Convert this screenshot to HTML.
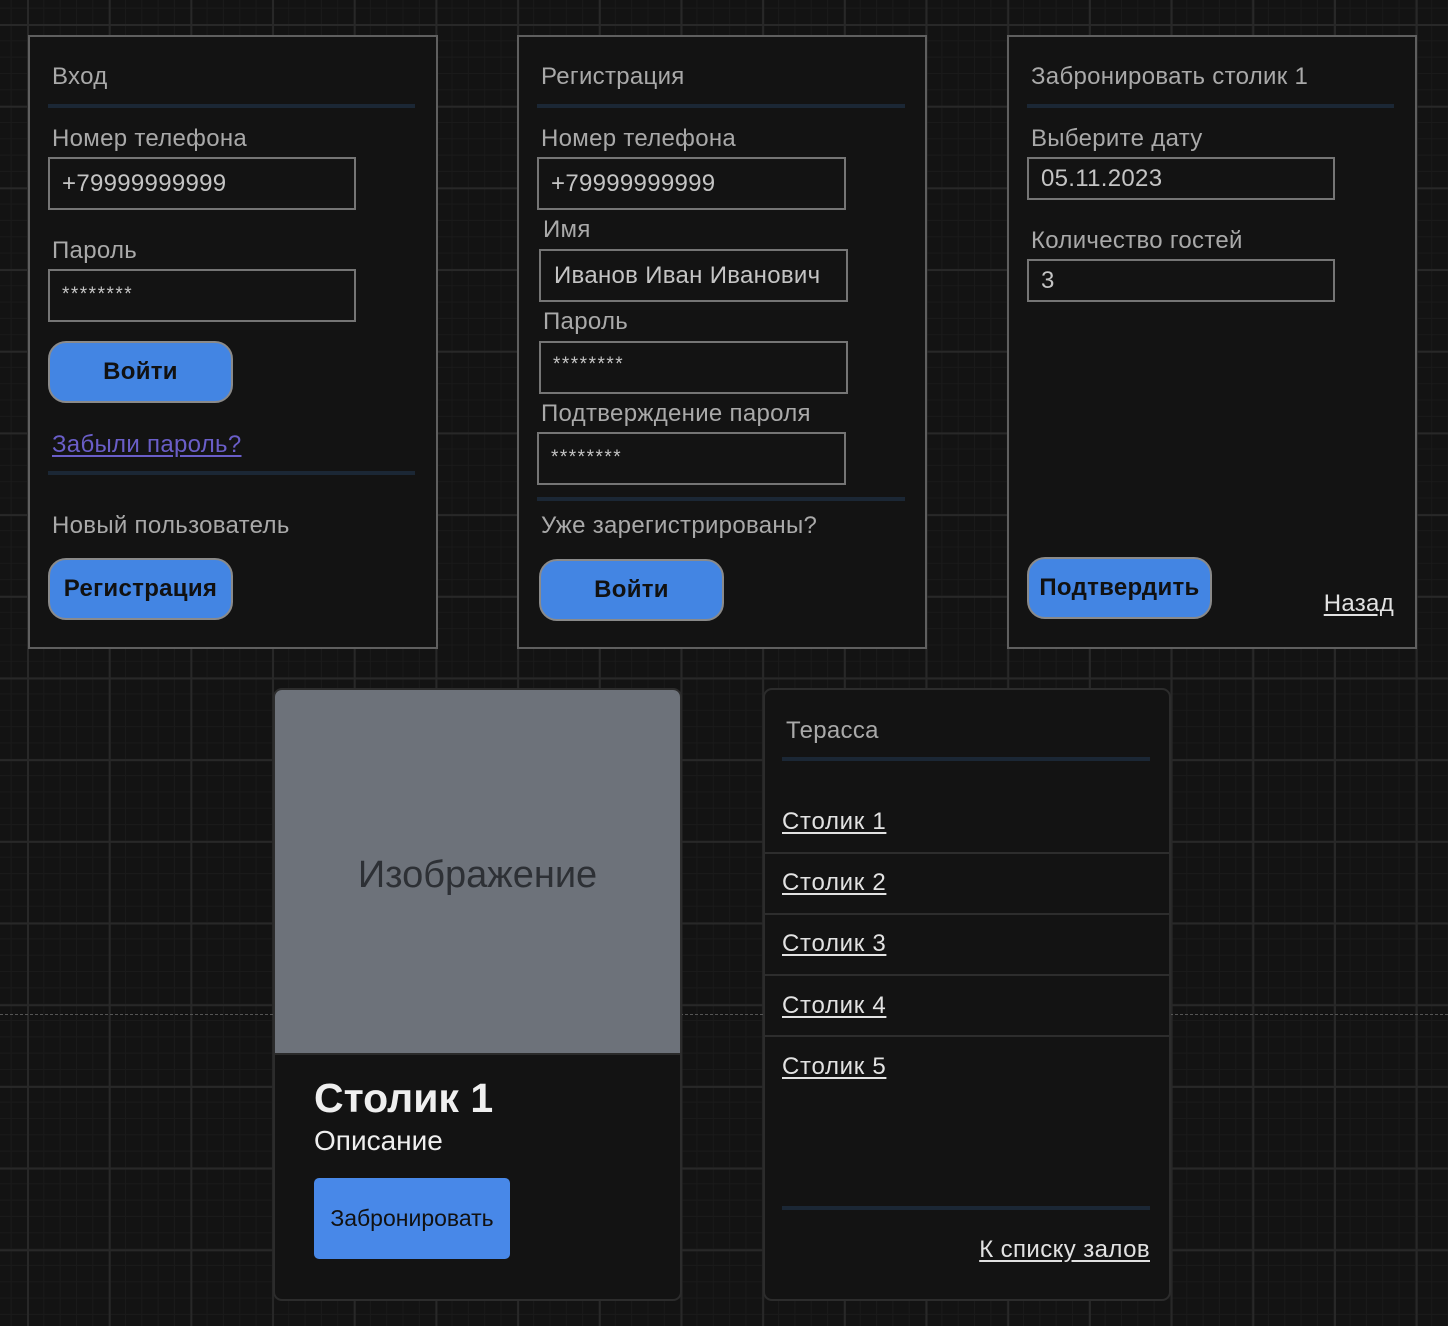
<!DOCTYPE html>
<html><head><meta charset="utf-8"><style>
*{margin:0;padding:0;box-sizing:border-box}
html,body{width:1448px;height:1326px;overflow:hidden}
body{position:relative;font-family:"Liberation Sans","Noto Sans CJK SC",sans-serif;
background-color:#131313;
background-image:
linear-gradient(to right,#282828 0 2px,transparent 2px),
linear-gradient(to bottom,#282828 0 2px,transparent 2px),
linear-gradient(to right,#1a1a1a 0 1px,transparent 1px),
linear-gradient(to bottom,#1a1a1a 0 1px,transparent 1px);
background-size:81.7px 81.7px,81.7px 81.7px,16.34px 16.34px,16.34px 16.34px;
background-position:27px 0,0 24px,27px 0,0 24px;}
.a{position:absolute}
.card{position:absolute;background:#131313;border:2px solid #5f5f5f}
.rc{position:absolute;background:#131313;border:2px solid #2c2c2c;border-radius:9px;overflow:hidden}
.t{position:absolute;line-height:28px;font-size:24px;letter-spacing:0.3px;color:#a9a9a9;white-space:nowrap}
.div{position:absolute;height:4px;background:#1b2735}
.in{position:absolute;border:2px solid #757575;background:#131313}
.v{position:absolute;line-height:28px;font-size:24px;letter-spacing:0.3px;color:#c4c4c4;white-space:nowrap}
.s{position:absolute;line-height:20px;font-size:19px;color:#c4c4c4;letter-spacing:1.5px}
.btn{position:absolute;width:185px;height:62px;border:2px solid #8a8a8a;border-radius:18px;background:#4385e3;color:#111;font-weight:bold;font-size:24px;letter-spacing:0.3px;display:flex;align-items:center;justify-content:center}
.lk{position:absolute;line-height:28px;font-size:24px;letter-spacing:0.7px;color:#e2e2e2;text-decoration:underline;text-underline-offset:3px;white-space:nowrap}
.sep{position:absolute;left:0;width:100%;height:2px;background:#2d2d2d}
</style></head><body>
<div class="a" style="left:0;top:1014px;width:1448px;border-top:1px dashed #555"></div>

<!-- Card 1 -->
<div class="card" style="left:28px;top:35px;width:410px;height:614px"></div>
<div class="t" style="left:52px;top:63px">Вход</div>
<div class="div" style="left:48px;top:104px;width:367px"></div>
<div class="t" style="left:52px;top:125px">Номер телефона</div>
<div class="in" style="left:48px;top:157px;width:308px;height:53px"></div>
<div class="v" style="left:62px;top:170px">+79999999999</div>
<div class="t" style="left:52px;top:237px">Пароль</div>
<div class="in" style="left:48px;top:269px;width:308px;height:53px"></div>
<div class="s" style="left:62px;top:285px">********</div>
<div class="btn" style="left:48px;top:341px">Войти</div>
<div class="lk" style="left:52px;top:431px;color:#6a5ec8;letter-spacing:0.3px">Забыли пароль?</div>
<div class="div" style="left:48px;top:471px;width:367px"></div>
<div class="t" style="left:52px;top:512px">Новый пользователь</div>
<div class="btn" style="left:48px;top:558px">Регистрация</div>

<!-- Card 2 -->
<div class="card" style="left:517px;top:35px;width:410px;height:614px"></div>
<div class="t" style="left:541px;top:63px">Регистрация</div>
<div class="div" style="left:537px;top:104px;width:368px"></div>
<div class="t" style="left:541px;top:125px">Номер телефона</div>
<div class="in" style="left:537px;top:157px;width:309px;height:53px"></div>
<div class="v" style="left:551px;top:170px">+79999999999</div>
<div class="t" style="left:543px;top:216px">Имя</div>
<div class="in" style="left:539px;top:249px;width:309px;height:53px"></div>
<div class="v" style="left:554px;top:262px">Иванов Иван Иванович</div>
<div class="t" style="left:543px;top:308px">Пароль</div>
<div class="in" style="left:539px;top:341px;width:309px;height:53px"></div>
<div class="s" style="left:553px;top:355px">********</div>
<div class="t" style="left:541px;top:400px">Подтверждение пароля</div>
<div class="in" style="left:537px;top:432px;width:309px;height:53px"></div>
<div class="s" style="left:551px;top:448px">********</div>
<div class="div" style="left:537px;top:497px;width:368px"></div>
<div class="t" style="left:541px;top:512px">Уже зарегистрированы?</div>
<div class="btn" style="left:539px;top:559px">Войти</div>

<!-- Card 3 -->
<div class="card" style="left:1007px;top:35px;width:410px;height:614px"></div>
<div class="t" style="left:1031px;top:63px">Забронировать столик 1</div>
<div class="div" style="left:1027px;top:104px;width:367px"></div>
<div class="t" style="left:1031px;top:125px">Выберите дату</div>
<div class="in" style="left:1027px;top:157px;width:308px;height:43px"></div>
<div class="v" style="left:1041px;top:165px">05.11.2023</div>
<div class="t" style="left:1031px;top:227px">Количество гостей</div>
<div class="in" style="left:1027px;top:259px;width:308px;height:43px"></div>
<div class="v" style="left:1041px;top:267px">3</div>
<div class="btn" style="left:1027px;top:557px">Подтвердить</div>
<div class="lk" style="right:54px;top:590px;letter-spacing:0.3px">Назад</div>

<!-- Card A -->
<div class="rc" style="left:273px;top:688px;width:409px;height:613px">
  <div class="a" style="left:0;top:0;width:405px;height:365px;background:#6d727a;border-bottom:2px solid #2a2a2a"></div>
  <div class="a" style="left:0;top:164px;width:405px;text-align:center;font-size:38px;line-height:42px;color:#2d3035">Изображение</div>
  <div class="a" style="left:39px;top:385px;font-size:41px;line-height:46px;font-weight:bold;color:#efefef">Столик 1</div>
  <div class="a" style="left:39px;top:436px;font-size:28px;line-height:30px;color:#efefef">Описание</div>
  <div class="a" style="left:39px;top:488px;width:196px;height:81px;border-radius:5px;background:#4888e8;color:#111;font-size:23px;display:flex;align-items:center;justify-content:center;white-space:nowrap">Забронировать</div>
</div>

<!-- Card B -->
<div class="rc" style="left:763px;top:688px;width:408px;height:613px">
  <div class="t" style="left:21px;top:27px">Терасса</div>
  <div class="div" style="left:17px;top:67px;width:368px"></div>
  <div class="lk" style="left:17px;top:118px">Столик 1</div>
  <div class="sep" style="top:162px"></div>
  <div class="lk" style="left:17px;top:179px">Столик 2</div>
  <div class="sep" style="top:223px"></div>
  <div class="lk" style="left:17px;top:240px">Столик 3</div>
  <div class="sep" style="top:284px"></div>
  <div class="lk" style="left:17px;top:302px">Столик 4</div>
  <div class="sep" style="top:345px"></div>
  <div class="lk" style="left:17px;top:363px">Столик 5</div>
  <div class="div" style="left:17px;top:516px;width:368px"></div>
  <div class="lk" style="right:19px;top:546px;letter-spacing:0.4px">К списку залов</div>
</div>
</body></html>
